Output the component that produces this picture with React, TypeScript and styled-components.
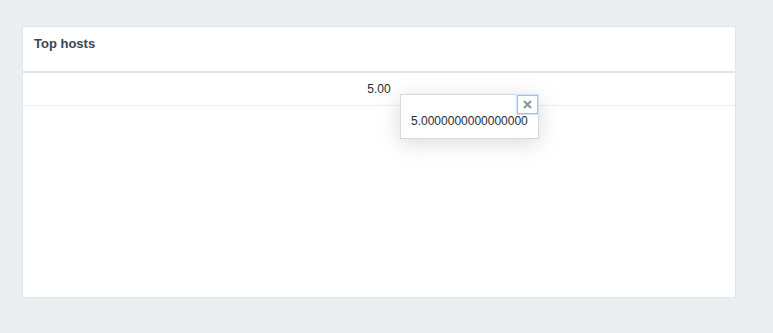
import React from 'react';
import styled, { createGlobalStyle } from 'styled-components';

const GlobalStyle = createGlobalStyle`
  html, body {
    margin: 0;
    padding: 0;
    background: #ebeef0;
    font-family: "Liberation Sans", Arial, sans-serif;
    color: #1f2c33;
  }
`;

const Page = styled.div`
  padding: 26px 0 0 22px;
  height: 333px;
  box-sizing: border-box;
`;

const Widget = styled.div`
  position: relative;
  width: 714px;
  height: 272px;
  box-sizing: border-box;
  background: #ffffff;
  border: 1px solid #dfe4e7;
`;

const WidgetHead = styled.div`
  height: 46px;
  box-sizing: border-box;
  padding: 8px 11px 0 11px;
  border-bottom: 2px solid #dfe4e7;
`;

const Title = styled.h4`
  margin: 0;
  font-size: 13px;
  line-height: 18px;
  font-weight: bold;
  color: #3b4651;
`;

const Table = styled.table`
  width: 100%;
  border-collapse: collapse;
`;

const Cell = styled.td`
  padding: 9px 5px;
  font-size: 12px;
  line-height: 14px;
  text-align: center;
  color: #1f2c33;
  border-bottom: 1px solid #ebeef0;
`;

const Hintbox = styled.div`
  position: absolute;
  left: 377px;
  top: 67px;
  width: 139px;
  height: 45px;
  box-sizing: border-box;
  padding: 19px 10px 0 10px;
  background: #ffffff;
  border: 1px solid #d2d9dd;
  box-shadow: 0 4px 22px rgba(0, 0, 0, 0.15);
  font-size: 12px;
  line-height: 14px;
  color: #1f2c33;
`;

const CloseButton = styled.button`
  position: absolute;
  top: 0;
  right: 0;
  width: 21px;
  height: 19px;
  padding: 0;
  display: flex;
  align-items: center;
  justify-content: center;
  background: #ffffff;
  border: 1px solid #9cc3ea;
  box-shadow: 0 0 0 1px #d3e4f6;
  cursor: pointer;
`;

const App: React.FC = () => {
  return (
    <>
      <GlobalStyle />
      <Page>
        <Widget>
          <WidgetHead>
            <Title>Top hosts</Title>
          </WidgetHead>
          <Table>
            <tbody>
              <tr>
                <Cell>5.00</Cell>
              </tr>
            </tbody>
          </Table>
          <Hintbox>
            5.0000000000000000
            <CloseButton aria-label="Close">
              <svg width="9" height="9" viewBox="0 0 9 9">
                <path d="M1 1 L8 8 M8 1 L1 8" stroke="#7f95a1" strokeWidth="2" />
              </svg>
            </CloseButton>
          </Hintbox>
        </Widget>
      </Page>
    </>
  );
};

export default App;
